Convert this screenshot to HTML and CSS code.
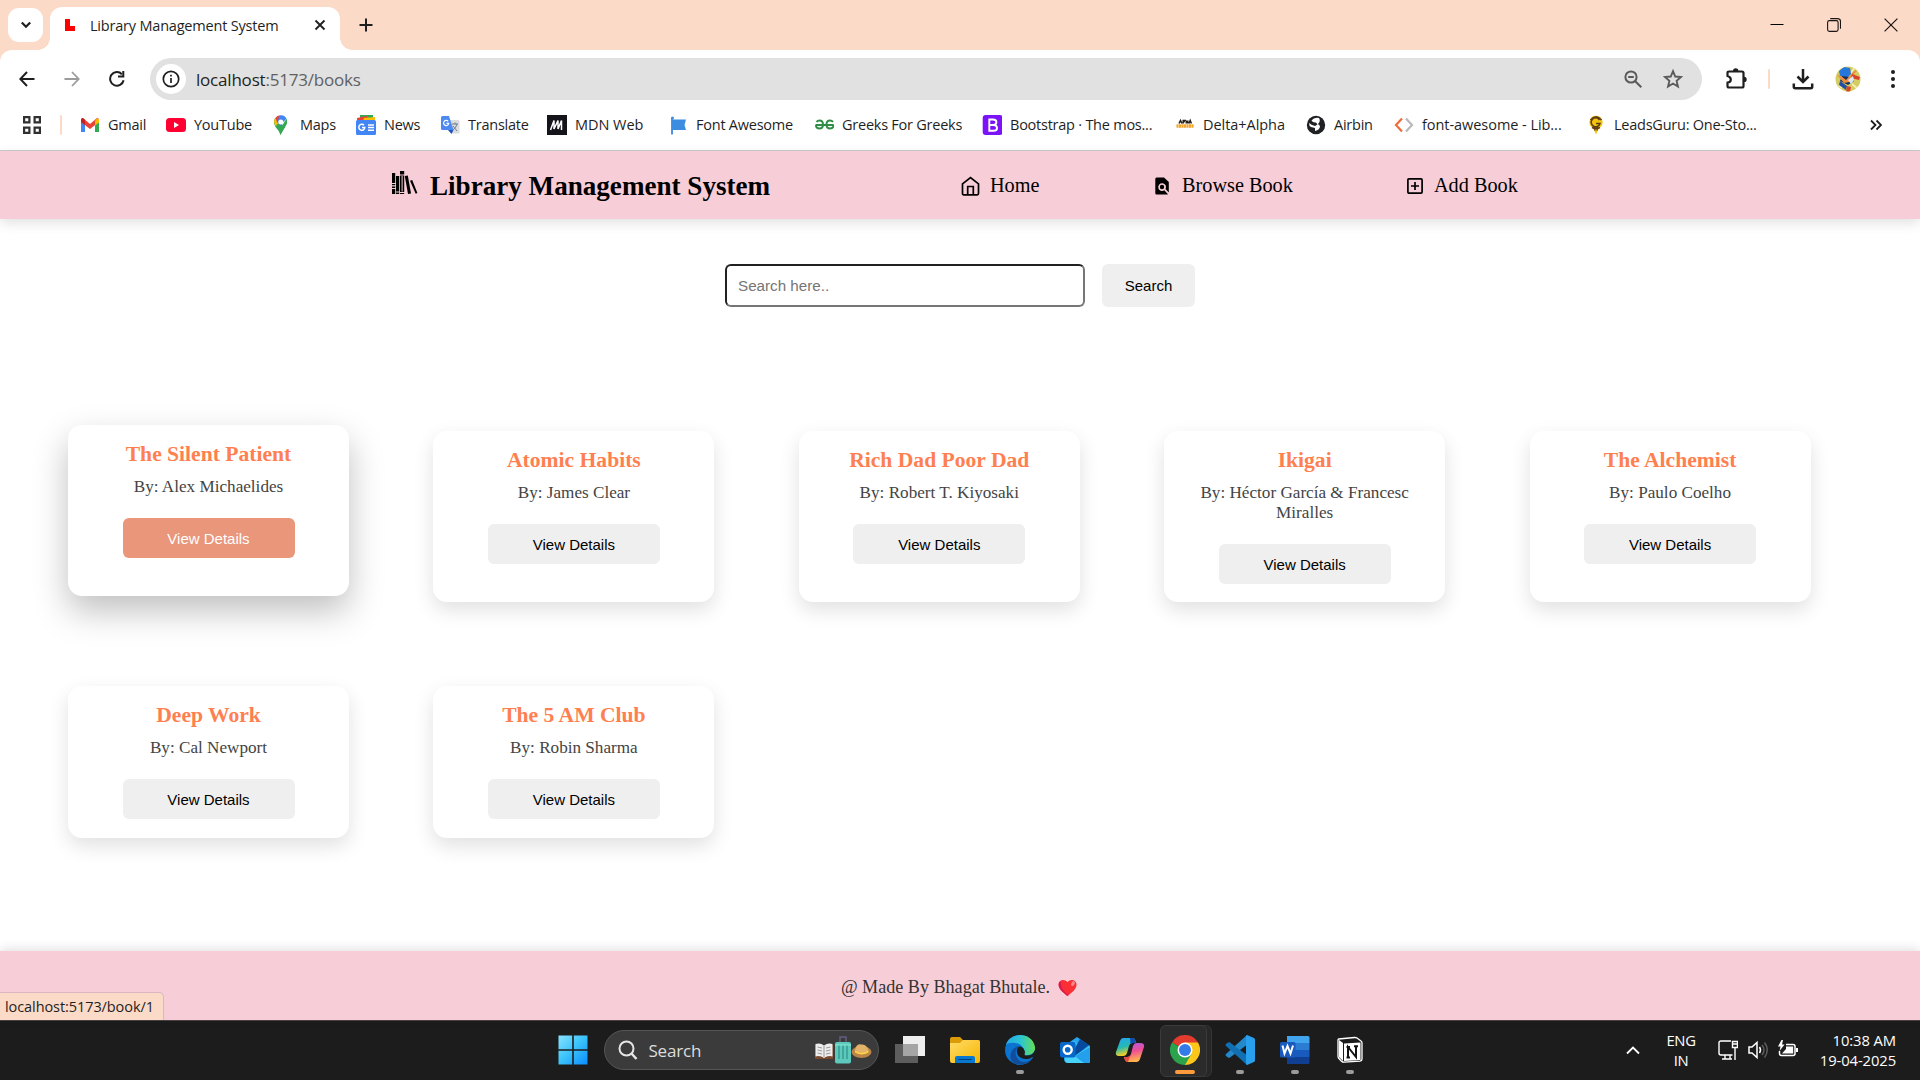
FILE: index.html
```html
<!DOCTYPE html>
<html lang="en">
<head>
<meta charset="utf-8">
<title>Library Management System</title>
<link rel="stylesheet" href="styles.css">
</head>
<body>
<div class="screen">
  <header class="browser">
    <div class="tabstrip">
      <button class="tab-search" aria-label="Search tabs"><svg width="12" height="12" viewBox="0 0 12 12"><path d="M1.8 3.5 6 7.7l4.2-4.2" fill="none" stroke="#1f1f1f" stroke-width="2.2"/></svg></button>
      <div class="tab">
        <svg class="favicon" width="10" height="12" viewBox="0 0 10 12"><path d="M0 0h5v7h5v5H0z" fill="#f00"/></svg>
        <span class="tab-title">Library Management System</span>
        <svg class="tab-close" width="12" height="12" viewBox="0 0 12 12"><path d="m1.5 1.5 9 9m0-9-9 9" stroke="#1f1f1f" stroke-width="1.8"/></svg>
      </div>
      <svg class="new-tab" width="14" height="14" viewBox="0 0 14 14"><path d="M7 .5v13M.5 7h13" stroke="#1f1f1f" stroke-width="2"/></svg>
      <div class="window-controls">
        <svg width="14" height="14" viewBox="0 0 14 14"><path d="M.5 6.5h13" stroke="#000"/></svg>
        <svg width="14" height="14" viewBox="0 0 14 14" fill="none" stroke="#1a1512" stroke-width="1.1"><rect x=".6" y="2.6" width="10.5" height="10.8" rx="1.8"/><path d="M3.2.6h7.3a3 3 0 0 1 3 3v7.2"/></svg>
        <svg width="14" height="14" viewBox="0 0 14 14"><path d="m.6.6 12.8 12.8m0-12.8L.6 13.4" stroke="#1a1512" stroke-width="1.2"/></svg>
      </div>
    </div>
    <div class="toolbar">
      <div class="nav-buttons">
        <svg width="16" height="16" viewBox="0 0 16 16" fill="none" stroke="#1f1f1f" stroke-width="2"><path d="M15.5 8H1.5M8 1 1.3 8 8 15"/></svg>
        <svg width="16" height="16" viewBox="0 0 16 16" fill="none" stroke="#9b9b9b" stroke-width="1.8"><path d="M.5 8h14M8 1l6.7 7L8 15"/></svg>
        <svg width="16" height="16" viewBox="0 0 16 16"><path d="M14.6 9.2A6.8 6.8 0 1 1 12.900 3.200" fill="none" stroke="#1f1f1f" stroke-width="2"/><path d="M15.300 0v6.500H9V4.600h4.300V0z" fill="#1f1f1f"/></svg>
      </div>
      <div class="omnibox">
        <span class="site-info"><svg width="18" height="18" viewBox="0 0 18 18"><circle cx="9" cy="9" r="7.700" fill="none" stroke="#1f1f1f" stroke-width="1.700"/><path d="M9 8v5M9 4.800v1.700" stroke="#1f1f1f" stroke-width="1.700"/></svg></span>
        <span class="url">localhost<span class="url-rest">:5173/books</span></span>
        <svg class="zoomed" width="18" height="18" viewBox="0 0 18 18" fill="none" stroke="#5a5a5a" stroke-width="2"><circle cx="7" cy="7" r="5.600"/><path d="m11 11 6.300 6.300M4.200 7h5.600"/></svg>
        <svg class="star" width="20" height="20" viewBox="0 0 20 20"><path d="m10 2.200 2.250 5.350 5.750.5-4.380 3.800 1.330 5.650L10 14.500l-4.950 3 1.330-5.650L2 8.050l5.750-.5z" fill="none" stroke="#5a5a5a" stroke-width="1.900"/></svg>
      </div>
      <div class="toolbar-actions">
        <svg width="22" height="22" viewBox="0 0 22 22"><path d="M1.500 8V4.800Q1.500 3.500 3 3.500h13q1.500 0 1.500 1.500v13q0 1.500-1.500 1.500H3q-1.500 0-1.500-1.500v-3.300q3.300-.5 3.300-3.200T1.500 8z" fill="none" stroke="#1f1f1f" stroke-width="2.200"/><path d="M7 3a2.700 2.700 0 0 1 5.400 0zM18 8.700a2.700 2.700 0 0 1 0 5.400z" fill="#1f1f1f"/></svg>
        <i class="divider"></i>
        <svg width="22" height="22" viewBox="0 0 22 22" fill="none" stroke="#1f1f1f" stroke-width="2.500"><path d="M11 1v12.500M5.500 8.500l5.500 5.500 5.500-5.500M1.800 15.500v3.200q0 1.500 1.500 1.500h15.400q1.500 0 1.500-1.500v-3.200"/></svg>
        <svg width="26" height="26" viewBox="0 0 26 26"><defs><clipPath id="avatar"><circle cx="13" cy="13" r="12.500"/></clipPath></defs><g clip-path="url(#avatar)"><path fill="#d4cd62" d="M0 0h26v26H0z"/><path d="M20 1l-4 6M17 18l6 5M4 19l3 3" stroke="#f2eeb0" stroke-width="2"/><path d="m4 5 5-4 6 1 1 6-4 4-7-2z" fill="#2676db"/><path d="m7 10 8 1 4 4-6 4-8-4z" fill="#19335e"/><path d="m2 9 4 1 5 4 8-9 3-1-8 12-5 1z" fill="#f08d3b"/><path d="m17 8 8 3-1 3-8-2z" fill="#d84329"/><path d="m13 14 5-4 1 4-3 4z" fill="#dae8fa"/><path d="m5 15 7 5-1 4-7-5z" fill="#254ca0"/><path d="m12 20 4 1-1 5h-4z" fill="#d84329"/></g></svg>
        <svg width="6" height="20" viewBox="0 0 6 20" fill="#1f1f1f"><circle cx="3" cy="3" r="2"/><circle cx="3" cy="10" r="2"/><circle cx="3" cy="17" r="2"/></svg>
      </div>
    </div>
    <nav class="bookmarks">
      <svg class="apps" width="18" height="18" viewBox="0 0 18 18" fill="none" stroke="#303030" stroke-width="2.200"><path d="M1.100 1.100h5.300v5.300H1.100zM11.600 1.100h5.300v5.300h-5.300zM1.100 11.600h5.300v5.300H1.100zM11.600 11.600h5.300v5.300h-5.300z"/></svg>
      <i class="divider"></i>
      <div class="bookmark-list">
        <a><svg viewBox="0 0 20 20"><path d="M1 5v12h4V8z" fill="#4285f4"/><path d="M15 8v9h4V5z" fill="#34a853"/><path d="M1 5q0-2 2-2l7 6 7-6q2 0 2 2v2l-9 7-9-7z" fill="#ea4335"/><path d="M15 6l2-2.500Q19 3 19 5v2.500l-4 3z" fill="#fbbc04"/><path d="M1 5q0-2 2-2l2 2v5L1 7z" fill="#c5221f"/></svg><span>Gmail</span></a>
        <a><svg viewBox="0 0 20 20"><rect y="3" width="20" height="14" rx="3.500" fill="#ff0033"/><path d="m8 7 5 3-5 3z" fill="#fff"/></svg><span>YouTube</span></a>
        <a><svg viewBox="0 0 20 20"><path d="M8.500 20C8 15 2 13 2 7q0-2 1.200-4L13 12c-2 3-3.500 4-4.500 8z" fill="#34a853"/><path d="M3 10q-1.700-4 .3-7l4 4-3.500 4z" fill="#fbbc04"/><path d="M3.300 3Q5 .8 7 .5l2 4L5.500 8z" fill="#ea4335"/><path d="M7 .5q5-1.400 7.500 3L8 11 5.800 7z" fill="#4285f4"/><path d="M14.500 3.500q1.500 4-.5 7L8.500 20 7 16z" fill="#34a853"/><circle cx="8.800" cy="7" r="2.500" fill="#fff"/></svg><span>Maps</span></a>
        <a><svg viewBox="0 0 20 20"><path d="M4 0h13v5H4z" fill="#34a853"/><path d="m1 3 10-2 2 7H1z" fill="#ea4335"/><path d="m8 3 11-1v7H6z" fill="#fbbc04"/><rect y="5" width="20" height="15" rx="1.500" fill="#4285f4"/><path d="M8 10.200A3 3 0 1 0 8.800 12.500H6M12 10h6M12 12.600h6M12 15.200h6" fill="none" stroke="#fff" stroke-width="1.500"/></svg><span>News</span></a>
        <a><svg viewBox="0 0 20 20"><path d="M7 5h11q1.500 0 1.500 1.500v12H12z" fill="#dadce0"/><path d="m8 15 5.500 0-2 4z" fill="#2553b8"/><path d="M1 2.500Q1 1 2.500 1H9l4.500 14h-11Q1 15 1 13.500z" fill="#4d8af0"/><path d="M8.200 6.300a2.600 2.600 0 1 0 .6 2H6.500" fill="none" stroke="#fff" stroke-width="1.200"/><path d="M12 9h6m-3-1.500V9m2 0q-1 4-4 6m0-4 4 5" fill="none" stroke="#727d86"/></svg><span>Translate</span></a>
        <a><svg viewBox="0 0 20 20"><path fill="#15141a" d="M0 0h20v20H0z"/><path d="M3.500 15 7 5.500V14l4-8.500V14l3.500-8.500V15" fill="none" stroke="#fff" stroke-width="1.500"/></svg><span class="wide">MDN Web</span></a>
        <a><svg viewBox="0 0 20 20"><path d="M4 2.500v17" stroke="#4c94e5" stroke-width="2"/><circle cx="4.500" cy="3" r="1.500" fill="#4390e0"/><path d="M4 4.500h14L16.500 10l1.500 5H4z" fill="#3c8de0"/></svg><span>Font Awesome</span></a>
        <a><svg viewBox="0 0 20 20"><g fill="none" stroke="#2f8d46" stroke-width="1.900"><path d="M2.500 7q1-1.500 3-1.500 3.500 0 3.500 4t-3.500 4T2 10.500v-1M19 7q-1-1.500-3-1.500-3.500 0-3.500 4t3.500 4 3.500-3v-1M2 10h17.500"/></g></svg><span>Greeks For Greeks</span></a>
        <a><svg viewBox="0 0 20 20"><rect x=".7" width="20" height="20" rx="3" fill="#7b12f7"/><path d="M7.300 4.500h3.800q3.300 0 3.300 2.700T11.100 10H7.300zm0 5.500h4.200q3.500 0 3.500 2.900t-3.500 2.900H7.300z" fill="none" stroke="#fff" stroke-width="1.900"/></svg><span>Bootstrap · The mos...</span></a>
        <a><svg viewBox="0 0 20 20"><path d="m4 8.500 1.500-3 1.500 3m1.200 0V5.500h1.600l-1 1.500m2.500-1.500v3m1.500-3v3m1.200 0 1.200-3 1.200 3" fill="none" stroke="#29211a" stroke-width="1.500"/><path d="M1.500 11h17.500" stroke="#f6a42b" stroke-width="3.600" stroke-dasharray="2.100 .4"/></svg><span class="wide">Delta+Alpha</span></a>
        <a><svg viewBox="0 0 20 20"><circle cx="10" cy="10" r="9.200" fill="#202124"/><path d="M13 3q-5-1-7.500 2.500Q7 8 10 7.500l1.500 2L9 11q-4-1-6-3 0 3 2 4l4 1v3q5-1 5-5l-2-2q3-3 1-6" fill="#fff"/></svg><span>Airbin</span></a>
        <a><svg viewBox="0 0 20 20"><path d="M8 3.500 2 10l6 6.500" fill="none" stroke="#f26b3a" stroke-width="2.200"/><path d="m12 3.500 6 6.500-6 6.500" fill="none" stroke="#b9b9b9" stroke-width="2.200"/></svg><span class="wide">font-awesome - Lib...</span></a>
        <a><svg viewBox="0 0 20 20"><path d="M10 .8a6.500 6.500 0 0 1 4.300 11.400L12 15l-2 4.500L8 15l-2.300-2.800A6.500 6.500 0 0 1 10 .8z" fill="#f1c40f"/><path d="M13.500 5a4.500 4.500 0 1 0 .5 3.500h-4M4.500 5q5.500-6.500 11 0M6 12.500q4 2 8 0M8.800 15.500v-4m2.400 4v-4" fill="none" stroke="#5c3b16" stroke-width="1.500"/></svg><span>LeadsGuru: One-Sto...</span></a>
      </div>
      <svg class="overflow" width="12" height="12" viewBox="0 0 12 12"><path d="M1 1.500 5.500 6 1 10.500M6.500 1.500 11 6l-4.500 4.500" fill="none" stroke="#1f1f1f" stroke-width="1.800"/></svg>
    </nav>
  </header>

  <div class="page">
    <header class="site-header">
      <div class="brand">
        <svg width="26" height="24" viewBox="0 0 26 24"><path d="M0 2h3.200v10H0zM0 13h3.200v1.200H0zM0 15.500h3.200V17H0zM0 18h3.200v5H0zM4 5h3.200v15.500H4zM4 21.500h3.200V23H4zM8 0h4.200v3.500H8zM8 4.500h4.200V21H8zM8 22h4.200v1H8z"/><path d="M10.100 5v15.500" stroke="#f7ced7" stroke-width="1"/><path d="m12.800 5 3-.4L19 22.600l-3 .5z"/><path d="m17.500 7.500 1.700-.8M18 9.700l2.200-.8 5.200 13-1.700.8z"/></svg>
        <h1>Library Management System</h1>
      </div>
      <nav class="site-nav">
        <a class="home"><svg width="20" height="20" viewBox="0 0 20 20" fill="none" stroke="#000" stroke-width="1.700"><path d="M1.500 7.800 9.500 1.500l8 6.300v9.700q0 1.300-1.300 1.300H2.800q-1.300 0-1.300-1.300z"/><path d="M6.700 18.500v-8h5.600v8"/></svg><span>Home</span></a>
        <a class="browse"><svg width="14" height="18" viewBox="0 0 14 18"><path d="M1.500.5H9L13.800 5v10.500L10.500 12a3.900 3.900 0 1 0-1.200 1.300l3.700 3.900-.5.300h-11Q.3 17.500.3 16V2Q.3.500 1.500.5z"/><circle cx="7" cy="10" r="2.200"/></svg><span>Browse Book</span></a>
        <a class="add"><svg width="16" height="16" viewBox="0 0 16 16" fill="none" stroke="#000" stroke-width="1.700"><rect x=".9" y=".9" width="14.200" height="14.200" rx="1"/><path d="M8 4v8M4 8h8"/></svg><span>Add Book</span></a>
      </nav>
    </header>

    <main class="content">
      <form class="search">
        <input type="text" placeholder="Search here..">
        <button type="button">Search</button>
      </form>
      <section class="books">
        <article class="book active"><h2>The Silent Patient</h2><p>By: Alex Michaelides</p><button>View Details</button></article>
        <article class="book"><h2>Atomic Habits</h2><p>By: James Clear</p><button>View Details</button></article>
        <article class="book"><h2>Rich Dad Poor Dad</h2><p>By: Robert T. Kiyosaki</p><button>View Details</button></article>
        <article class="book"><h2>Ikigai</h2><p>By: Héctor García &amp; Francesc Miralles</p><button>View Details</button></article>
        <article class="book"><h2>The Alchemist</h2><p>By: Paulo Coelho</p><button>View Details</button></article>
        <article class="book"><h2>Deep Work</h2><p>By: Cal Newport</p><button>View Details</button></article>
        <article class="book"><h2>The 5 AM Club</h2><p>By: Robin Sharma</p><button>View Details</button></article>
      </section>
    </main>

    <footer class="site-footer">
      <span>@ Made By Bhagat Bhutale.</span>
      <svg width="19" height="18" viewBox="0 0 19 18"><path d="M9.500 17C5 13.500.5 10 .5 5.500.5 1 6.500-.8 9.500 3.200c3-4 9-2.200 9 2.300 0 4.500-4.500 8-9 11.500z" fill="#f92f35"/><path d="M3 2Q.5 3 .7 6c.3 4 4.500 7.500 8.800 11l1-.8C6 13 2 8.500 3 2z" fill="#d51b52"/><ellipse cx="15" cy="4.600" rx="1.700" ry="2.600" transform="rotate(25 15 4.600)" fill="#ff8587"/></svg>
    </footer>
    <div class="status-bubble">localhost:5173/book/1</div>
  </div>

  <footer class="taskbar">
    <div class="pinned">
      <svg class="start" width="30" height="30" viewBox="0 0 30 30"><defs><linearGradient id="win" x2="1" y2="1"><stop stop-color="#8be2ff"/><stop offset=".45" stop-color="#3fc6fb"/><stop offset="1" stop-color="#0a8dfb"/></linearGradient></defs><path d="M.5.500h13.700v13.700H.5zM15.800.5h13.700v13.700H15.800zM.5 15.800h13.700v13.700H.5zM15.800 15.800h13.700v13.700H15.800z" fill="url(#win)"/></svg>
      <div class="task-search">
        <svg width="20" height="20" viewBox="0 0 20 20" fill="none" stroke="#e5e5e5"><circle cx="8.500" cy="8.500" r="7" stroke-width="2"/><path d="m13.500 13.500 5 5.500" stroke-width="2.500"/></svg>
        <span>Search</span>
        <svg class="doodle" width="58" height="30" viewBox="0 0 58 30"><path d="M1 10h18v14H1z" fill="#7a4a2c"/><path d="M1.500 9q5-1.500 8.500 1.500Q14 7.500 18.500 9v12.500Q14 20 10 23q-4-3-8.500-1.500z" fill="#ededed"/><path d="M10 10.500V22M3.500 12l4.500 1M3.500 15l4.500 1M3.500 18l4.500 1M12 13l4.500-1M12 16l4.500-1M12 19l4.500-1" stroke="#999"/><path d="M26 8V2h6v6" fill="none" stroke="#655e80" stroke-width="1.500"/><rect x="21" y="7" width="16" height="21.500" rx="2" fill="#5cc9bc"/><path d="M25 10v14M29 10v14M33 10v14" stroke="#2f918a" stroke-width="1.200"/><path d="M21 10h16" stroke="#8ce6d8"/><ellipse cx="47.500" cy="17" rx="10" ry="6" fill="#b98548"/><path d="M41 16q1-8 6-6.500 6-1 7.500 6.500-6 4-13.500 0z" fill="#e2b26b"/><path d="M41 15.500q6.500 4.500 13.500 0v2q-7 4-13.500 0z" fill="#ffd246"/></svg>
      </div>
      <svg width="30" height="30" viewBox="0 0 30 30"><path d="M0 9h23v19H0z" fill="#5d5d5d"/><path d="M8 1h22v20H8z" fill="#eee"/><path d="M8 9h15v12H8z" fill="#a5a5a5"/></svg>
      <svg width="30" height="30" viewBox="0 0 30 30"><defs><linearGradient id="fold" x2="1" y2="1"><stop stop-color="#ffdc68"/><stop offset="1" stop-color="#f7b500"/></linearGradient></defs><path d="M0 4q0-2 2-2h8l3 3h15q2 0 2 2v8H0z" fill="#dc9c08"/><path d="M0 8h10l3-3h15q2 0 2 2v19q0 2-2 2H2q-2 0-2-2z" fill="url(#fold)"/><path d="M5 28v-5q0-2 2-2h16q2 0 2 2v5z" fill="#0877cf"/><path d="M8.500 24.500h13" stroke="#053f7a"/></svg>
      <span class="app running"><svg width="30" height="30" viewBox="0 0 30 30"><defs><linearGradient id="eg" x2="1"><stop stop-color="#27a8e5"/><stop offset=".5" stop-color="#2cc4d2"/><stop offset="1" stop-color="#64df54"/></linearGradient></defs><circle cx="15" cy="15" r="15" fill="#0b73d0"/><path d="M1 10C4-3 27-4 30 12c1 6-5 9-10 8-3-.5 0-2-1-5C17 7 5 6 1 10z" fill="url(#eg)"/><path d="M14 11c-7 6-2 16 5 16 4 0 7-2 8.500-4C20 34 2 31 6 18c1-4 4-6 8-7z" fill="#124d9c"/><path d="M14 11.500C9 16 13 25 22 24c3 0 5-2 5.500-2l2.500 2v-9q-2 6-9 5.500c-3 0 0-2-1.500-5-1-3-3-4-5.500-4z" fill="#1c1c1c"/></svg></span>
      <svg width="30" height="30" viewBox="0 0 30 30"><path d="M4 11 17 2l13 9v15q0 2-2 2H8q-3 0-4-3z" fill="#25a7ee"/><path d="m14 6 6 4-10 7V9z" fill="#35c2f7"/><path d="m20 4 9 6-14 11v-8z" fill="#064a9f"/><path d="m30 11-17 11v6h15q2 0 2-2z" fill="#47d3f7"/><path d="m30 12-15 9 8 7h5q2 0 2-2z" fill="#249feb"/><path d="M5 22h10l9 6H8q-3 0-3-3z" fill="#47d3f7"/><rect y="7" width="15.500" height="15.500" rx="2" fill="#0768c9"/><circle cx="7.700" cy="14.700" r="4" fill="none" stroke="#fff" stroke-width="2.400"/></svg>
      <svg width="30" height="30" viewBox="0 0 30 30"><defs><linearGradient id="c1" y2="1" x2=".3"><stop stop-color="#25a4f3"/><stop offset=".55" stop-color="#24b9b2"/><stop offset="1" stop-color="#ffd21c"/></linearGradient><linearGradient id="c2" y2="1" x2=".2"><stop stop-color="#a65de9"/><stop offset=".5" stop-color="#ef4f96"/><stop offset="1" stop-color="#ffb14b"/></linearGradient></defs><path d="M8 3h10q2 0 3 5h-3q-3 0-4 3l-2 7q-1 3-4 3H4q-4 0-3-4L5 6q1-3 3-3z" fill="url(#c1)"/><path d="M22 27H13q-3 0-4-5h3q3 0 4-3l2-8q1-3 4-3h3q5 0 4 4l-4 12q-1 3-3 3z" fill="url(#c2)"/><path d="M15 3h3q2 0 3 5h-3q-1.500 0-2.500 1z" fill="#124dae"/><path d="M9 22h3q2.500 0 3.500-2L13 27q-3 0-4-5z" fill="#e64b42"/></svg>
      <span class="app chrome"><svg width="30" height="30" viewBox="0 0 30 30"><path d="M15 15 2 7.500A15 15 0 0 1 28 7.500z" fill="#e33b2e"/><path d="M15 15V7.500h13A15 15 0 0 1 15 30l-2-4z" fill="#fdc61a"/><path d="m15 15 6.500 3.700L15 30A15 15 0 0 1 2 7.500z" fill="#2ba24c"/><circle cx="15" cy="15" r="7.500" fill="#fff"/><circle cx="15" cy="15" r="6" fill="#347bea"/></svg></span>
      <span class="app running"><svg width="30" height="30" viewBox="0 0 30 30"><path d="M22 0 1 19q-1 1 0 2l2 1.500q1 .5 2 0L23 9z" fill="#2489ca"/><path d="M22 30 1 11q-1-1 0-2l2-1.500q1-.5 2 0L23 21z" fill="#1070b3"/><path d="M22 0q-1 0-1 2v26q0 2 1 2l7-3q1-.500 1-2V5q0-1.500-1-2z" fill="#28a0ee"/></svg></span>
      <span class="app running"><svg width="30" height="30" viewBox="0 0 30 30"><path d="M7 1h21q1.500 0 1.500 1.500V8H7z" fill="#41a5ee"/><path d="M7 8h22.500v7H7z" fill="#2b7cd3"/><path d="M7 15h22.500v7H7z" fill="#185abd"/><path d="M7 22h22.500v5.500Q29.500 29 28 29H7z" fill="#103f91"/><rect y="7" width="15.500" height="15.500" rx="1.500" fill="#185abd"/><path d="m2.500 10.500 2 8L7.500 11l3 7.500 2.500-8" fill="none" stroke="#fff" stroke-width="2"/></svg></span>
      <span class="app running"><svg width="30" height="30" viewBox="0 0 30 30"><path d="m3.500 4 16-1.500Q21 2.400 22 3l4 3q1 .7 1 2v16q0 2-2 2.200l-16 1q-1.500 0-2.500-1L3.500 23q-.5-1-.5-2V5q0-.8.500-1z" fill="#1c1c1c" stroke="#fff" stroke-width="1.300"/><path d="m4 5 4 3v18l-4-4z" fill="#fff"/><path d="m9 8.500 16.500-1V25L9 26z" fill="#fff"/><path d="M13 23V12l8 10V11M11.500 12H15M11.500 22.500H15M19 11.200h4" fill="none" stroke="#111" stroke-width="2"/></svg></span>
    </div>
    <div class="tray">
      <svg class="chevron" width="14" height="9" viewBox="0 0 14 9"><path d="m1 7.500 6-6 6 6" fill="none" stroke="#fff" stroke-width="1.800"/></svg>
      <div class="lang"><span>ENG</span><span>IN</span></div>
      <div class="tray-icons">
        <svg width="20" height="20" viewBox="0 0 20 20" fill="none" stroke="#fff" stroke-width="1.400"><path d="M13 1H3Q1 1 1 3v10q0 2 2 2h11.500M7 15v4m5-4v4M4 19h10"/><path d="M14.500 1.500h5v6h-5zM17 7.500V20M14.500 4h5"/></svg>
        <svg width="20" height="20" viewBox="0 0 20 20" fill="none" stroke="#fff" stroke-width="1.500"><path d="M1 7h3l5-4.500v15L4 13H1zM11.500 7q2 3 0 6"/><path d="M14 5q4 5 0 10M16.500 2.500q5.500 7.500 0 15" stroke="#5b5b5b"/></svg>
        <svg width="20" height="20" viewBox="0 0 20 20"><path d="M8 4.500h7q2 0 2 2v7q0 2-2 2H3.500q-2 0-2-2V11" fill="none" stroke="#fff" stroke-width="1.500"/><path d="M8 6.500h7.200v7H4L8 9zM18 8h2v4h-2zM3.500 0 0 6.500h2.500L1.500 11 6.500 4.500H4L5 0z" fill="#fff"/></svg>
      </div>
      <div class="clock"><span>10:38 AM</span><span>19-04-2025</span></div>
    </div>
  </footer>
</div>
</body>
</html>
```
FILE: styles.css
```css
* { box-sizing: border-box; }
body { margin: 0; background: #fff; }
svg { display: block; flex: none; }
h1, h2, p { margin: 0; }
button { border: 0; padding: 0; }

.screen { width: 1920px; height: 1080px; display: flex; flex-direction: column; overflow: hidden; }

/* Browser chrome */
.browser, .taskbar, .status-bubble { font-family: "Segoe UI", "Open Sans", "Noto Sans", sans-serif; color: #1f1f1f; white-space: nowrap; }
.browser { height: 151px; border-bottom: 1px solid #c9cccb; background: #fcdac8; }
.tabstrip { height: 50px; display: flex; align-items: center; padding-left: 8px; }
.tab-search { width: 35px; height: 34px; border-radius: 11px; background: #fff; display: grid; place-items: center; }
.tab { position: relative; width: 290px; height: 43px; margin: 7px 0 0 7px; padding: 0 14px 7px 15px; background: #fff; border-radius: 12px 12px 0 0; display: flex; align-items: center; }
.tab::before, .tab::after { content: ""; position: absolute; bottom: 0; width: 12px; height: 12px; }
.tab::before { left: -12px; background: radial-gradient(circle at 0 0, transparent 11.5px, #fff 12px); }
.tab::after { right: -12px; background: radial-gradient(circle at 100% 0, transparent 11.5px, #fff 12px); }
.tab-title { margin-left: 15px; font-size: 14.500px; letter-spacing: -0.2px; }
.tab-close { margin-left: auto; }
.new-tab { margin-left: 19px; }
.window-controls { margin-left: auto; display: flex; gap: 43px; padding-right: 22px; }

.toolbar { height: 58px; background: #fff; border-radius: 12px 12px 0 0; display: flex; align-items: center; }
.nav-buttons { width: 150px; display: flex; gap: 29px; padding-left: 19px; }
.omnibox { width: 1552px; height: 42px; border-radius: 21px; background: #e1e1e1; display: flex; align-items: center; padding: 0 19px 0 6px; }
.site-info { width: 30px; height: 30px; border-radius: 50%; background: #fff; display: grid; place-items: center; }
.url { margin-left: 10px; font-size: 17px; letter-spacing: -0.2px; }
.url-rest { color: #5f6062; }
.zoomed { margin-left: auto; }
.star { margin-left: 21px; }
.toolbar-actions { flex: 1; display: flex; align-items: center; padding-left: 24px; }
.divider { width: 2px; height: 20px; background: #fcdac8; border-radius: 1px; }
.toolbar-actions .divider { margin: 0 22px 0 20px; }
.toolbar-actions svg:nth-of-type(3) { margin-left: 21px; }
.toolbar-actions svg:nth-of-type(4) { margin-left: 29px; }

.bookmarks { height: 42px; padding-bottom: 9px; background: #fff; display: flex; align-items: center; font-size: 14.500px; }
.apps { margin-left: 23px; }
.bookmarks .divider { margin: 0 18px 0 19px; }
.bookmark-list { display: grid; grid-template-columns: 86px 106px 84px 84px 107px 121px 146px 168px 193px 131px 88px 192px 284px; }
.bookmark-list a { display: flex; align-items: center; gap: 8px; letter-spacing: -0.24px; }
.bookmark-list .wide { letter-spacing: -0.05px; }
.bookmark-list svg { width: 20px; height: 20px; }

/* Site */
.page { position: relative; height: 869px; display: flex; flex-direction: column; font-family: "Times New Roman", "Liberation Serif", serif; }
.site-header { height: 68px; background: #f7ced7; box-shadow: 0 4px 12px rgba(0, 0, 0, .12); display: flex; align-items: center; padding-left: 392px; }
.brand { display: flex; align-items: center; gap: 12px; width: 569px; }
.brand svg { margin-bottom: 5px; }
.brand h1 { font-size: 27.100px; line-height: 32px; padding-top: 2px; }
.site-nav { display: grid; grid-template-columns: 194px 252px 120px; align-items: center; font-size: 20.250px; }
.site-nav a { display: flex; align-items: center; padding-top: 1px; }
.home { gap: 9px; }
.browse { gap: 13px; }
.add { gap: 11px; }

.content { flex: 1; }
.search { display: flex; justify-content: center; gap: 17px; padding-top: 45px; }
.search input { width: 360px; height: 43px; padding: 0 11px; border: 2px inset #767676; border-radius: 6px; background: #fff; font: 15.200px Arial, "Liberation Sans", sans-serif; }
.search input::placeholder { color: #757575; }
.search button { width: 93px; height: 43px; border-radius: 6px; background: #efefef; color: #000; font: 15px Arial, "Liberation Sans", sans-serif; }

.books { display: grid; grid-template-columns: repeat(5, 281px); grid-template-rows: 171px 152px; gap: 84px 84.400px; padding: 124px 68px 0; }
.book { border-radius: 14px; background: #fff; box-shadow: 0 8px 20px rgba(0, 0, 0, .12); padding: 17px 18px 18px; display: flex; flex-direction: column; align-items: center; text-align: center; }
.book h2 { font-size: 21.600px; line-height: 25px; color: #ff7f50; white-space: nowrap; }
.book p { margin-top: 10px; font-size: 17.150px; line-height: 20px; color: #444; }
.book button { margin-top: 21px; flex: none; width: 172px; height: 40px; border-radius: 6px; background: #efefef; color: #000; font: 15px Arial, "Liberation Sans", sans-serif; }
.book.active { transform: translateY(-6px); box-shadow: 0 15px 34px rgba(0, 0, 0, .25); }
.book.active button { background: #e9967a; color: #fff; }

.site-footer { height: 69px; background: #f7ced7; box-shadow: 0 -2px 10px rgba(0, 0, 0, .12); display: flex; justify-content: center; align-items: center; gap: 8px; padding: 4px 2px 0 0; color: #333; font-size: 18.100px; }
.status-bubble { position: absolute; left: 0; bottom: 0; width: 164px; height: 28px; padding: 1px 5px; background: #fcdac8; border: solid #d9b6c0; border-width: 1px 1px 0 0; border-top-right-radius: 5px; font-size: 14.500px; line-height: 26px; letter-spacing: -0.08px; }

/* Taskbar */
.taskbar { height: 60px; padding-bottom: 1px; background: #1c1c1c; border-top: 1px solid #4a4344; display: flex; align-items: center; color: #fff; }
.pinned { margin-left: 557.500px; display: flex; align-items: center; gap: 25px; }
.task-search { width: 275px; height: 40px; margin: 0 -9px; border: 1px solid #565656; border-radius: 20px; background: #3b3b3b; display: flex; align-items: center; padding: 0 6px 0 13px; font-size: 17px; letter-spacing: -0.2px; color: #ddd; }
.task-search span { margin-left: 11px; }
.doodle { margin-left: auto; }
.app { position: relative; width: 30px; height: 30px; }
.app svg { position: relative; }
.app::after { content: ""; position: absolute; left: 11px; top: 35px; width: 8px; height: 4px; border-radius: 2px; background: #9b9b9b; }
.app.chrome::before { content: ""; position: absolute; left: -10px; top: -10px; width: 45px; height: 50px; border: 1px solid #3b3b3b; border-radius: 6px; background: #2b2b2b; box-shadow: 5px 0 0 -1px #272727, 5px 0 0 0 #343434; }
.app.chrome::after { left: 5px; width: 20px; background: #ff9a3d; }
.tray { margin-left: auto; display: flex; align-items: center; padding-right: 24px; font-size: 14.800px; line-height: 20px; }
.lang, .clock { display: flex; flex-direction: column; letter-spacing: -0.1px; }
.lang { width: 34px; margin-left: 24px; align-items: center; letter-spacing: -0.3px; }
.tray-icons { display: flex; gap: 10px; margin-left: 20px; }
.clock { width: 81px; margin-left: 17px; align-items: flex-end; padding-bottom: 1px; }
```
